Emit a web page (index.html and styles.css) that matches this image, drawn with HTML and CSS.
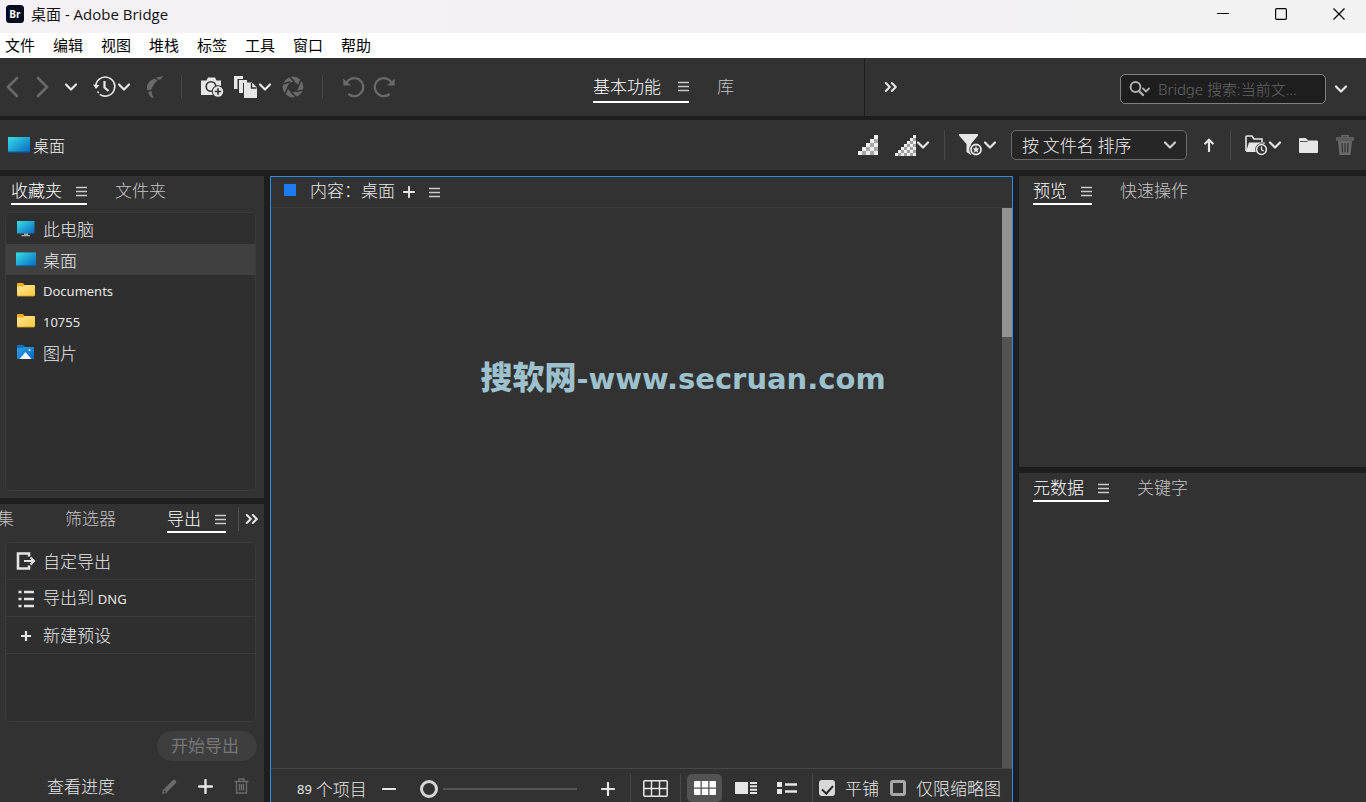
FILE: index.html
```html
<!DOCTYPE html>
<html lang="zh-CN">
<head>
<meta charset="utf-8">
<meta name="viewport" content="width=device-width, initial-scale=1">
<title>桌面 - Adobe Bridge</title>
<link rel="stylesheet" href="styles.css">
</head>
<body>
<svg class="defs" width="0" height="0" aria-hidden="true">
  <defs>
    <linearGradient id="blue" x1="0" y1="0" x2="1" y2="1"><stop offset="0" stop-color="#35dfe8"/><stop offset="1" stop-color="#0a67c0"/></linearGradient>
    <linearGradient id="yellow" x1="0" y1="0" x2="1" y2="1"><stop offset="0" stop-color="#ffe59c"/><stop offset="1" stop-color="#ffc937"/></linearGradient>
    <linearGradient id="photo" x1="0" y1="0" x2="1" y2="1"><stop offset="0" stop-color="#2aa5ec"/><stop offset="1" stop-color="#0a64bd"/></linearGradient>
    <symbol id="chev" viewBox="0 0 14 10"><path d="M2 2.500l5 5 5-5" fill="none" stroke="currentColor" stroke-width="2.200" stroke-linecap="round" stroke-linejoin="round"/></symbol>
    <symbol id="burger" viewBox="0 0 11 11"><path d="M0 1.500h11M0 5.500h11M0 9.500h11" stroke="currentColor" stroke-width="1.300"/></symbol>
    <symbol id="more" viewBox="0 0 14 12"><path d="M1.800 2l4 4-4 4M7.800 2l4 4-4 4" fill="none" stroke="currentColor" stroke-width="2.100" stroke-linecap="round" stroke-linejoin="round"/></symbol>
    <symbol id="plus" viewBox="0 0 14 14"><path d="M7 1v12M1 7h12" stroke="currentColor" stroke-width="2.200" stroke-linecap="round"/></symbol>
    <symbol id="folder" viewBox="0 0 18 14"><path d="M0 1q0-1 1-1h5l1.500 2H17v5H0z" fill="#f5ae0d"/><path d="M0 3.500h6L8 2h9q1 0 1 1v9q0 1-1 1H1q-1 0-1-1z" fill="url(#yellow)"/><path d="M0 13h17" stroke="#dea11e" stroke-width=".8"/></symbol>
    <symbol id="desk" viewBox="0 0 22 16"><path d="M0 0h22v15.500H0z" fill="url(#blue)"/><path d="M0 15.200h22" stroke="#0b4a82" stroke-width="1.200"/></symbol>
  </defs>
</svg>

<header class="titlebar">
  <svg width="18" height="18" viewBox="0 0 18 18" aria-hidden="true"><rect width="18" height="18" rx="3.500" fill="#020b1f"/><text x="9" y="12.500" text-anchor="middle" class="logo-text">Br</text></svg>
  <h1 class="window-title">桌面 - Adobe Bridge</h1>
  <div class="window-controls">
    <button aria-label="最小化"><svg width="12" height="12"><path d="M0 5.500h12" stroke="#000"/></svg></button>
    <button aria-label="最大化"><svg width="12" height="12"><rect x=".6" y=".6" width="10.800" height="10.800" rx="1.200" fill="none" stroke="#000" stroke-width="1.200"/></svg></button>
    <button aria-label="关闭"><svg width="12" height="12"><path d="M.5.5l11 11m0-11l-11 11" stroke="#000" stroke-width="1.200"/></svg></button>
  </div>
</header>

<nav class="menubar" aria-label="菜单">
  <button>文件</button><button>编辑</button><button>视图</button><button>堆栈</button><button>标签</button><button>工具</button><button>窗口</button><button>帮助</button>
</nav>

<div class="toolbar">
  <div class="tools">
    <div class="nav-tools">
      <button class="dim" aria-label="后退"><svg width="14" height="22" viewBox="0 0 14 22"><path d="M11 2L2 11l9 9" fill="none" stroke="currentColor" stroke-width="2.600" stroke-linecap="round"/></svg></button>
      <button class="dim" aria-label="前进"><svg width="14" height="22" viewBox="0 0 14 22"><path d="M3 2l9 9-9 9" fill="none" stroke="currentColor" stroke-width="2.600" stroke-linecap="round"/></svg></button>
      <button aria-label="导航选项"><svg width="14" height="10"><use href="#chev"/></svg></button>
      <button aria-label="历史记录"><svg width="24" height="24" viewBox="0 0 24 24"><path d="M2.800 12a9.500 9.500 0 1 1 4 7.300" fill="none" stroke="currentColor" stroke-width="1.600"/><path d="M4.500 16.500l1.200 1.500" stroke="currentColor" stroke-width="1.500"/><path d="M0 9.500l6.500.5L3 14z" fill="currentColor"/><path d="M11.500 6v6.500l4 3.500" fill="none" stroke="currentColor" stroke-width="2.200"/></svg><svg width="14" height="10"><use href="#chev"/></svg></button>
      <button class="dim" aria-label="返回应用程序"><svg width="18" height="24" viewBox="0 0 18 24"><path d="M8.500 3.500L11.500 5.500Q7.500 8.500 5.500 14.500L1.500 15.500Q-1 7.500 8.500 3.500zM10 2.800L17 1l-2 3.200-2.500.6zM2.200 17l3.500-1Q5.500 20 8 23L5 22.300Q2.800 20 2.200 17z" fill="currentColor"/></svg></button>
    </div>
    <div class="import-tools">
      <button aria-label="从相机获取照片"><svg width="24" height="22" viewBox="0 0 24 22"><path d="M1 4.500h5.500L8 1.500h7l1.500 3H21v8h-2a6 6 0 0 0-5 6.500H1z" fill="currentColor"/><circle cx="11" cy="10.500" r="4.800" fill="none" stroke="#323232" stroke-width="1.600"/><circle cx="18" cy="15.500" r="6.200" fill="#323232"/><circle cx="18" cy="15.500" r="5.200" fill="currentColor"/><path d="M18 12.300v6.400M14.800 15.500h6.400" stroke="#323232" stroke-width="1.600"/></svg></button>
      <button aria-label="优化"><svg width="24" height="22" viewBox="0 0 24 22"><path d="M0 0h9v3H3.500v10H0zM5 4h8v3H9v10H5z" fill="currentColor"/><path d="M10 6.500h8l5 5V22H10z" fill="currentColor"/><path d="M17.500 7v5h5" fill="none" stroke="#323232" stroke-width="1.400"/></svg><svg width="14" height="10"><use href="#chev"/></svg></button>
      <button class="dim" aria-label="在 Camera Raw 中打开"><svg width="22" height="22" viewBox="0 0 22 22"><circle cx="11" cy="11" r="7.800" fill="none" stroke="currentColor" stroke-width="5.200"/><path d="M7 0l5.500 6M19 4l-3.500 8M22 14l-8 1.500M15 22l-6-6M3 18l3.500-8M0 8l8-2" stroke="#323232" stroke-width="1.600"/></svg></button>
    </div>
    <div class="rotate-tools">
      <button class="dim" aria-label="逆时针旋转"><svg width="23" height="22" viewBox="0 0 23 22"><path d="M4.500 6.500A9 9 0 1 1 7 18.500" fill="none" stroke="currentColor" stroke-width="2.300" stroke-linecap="round"/><path d="M1 2.500l.5 7H9z" fill="currentColor"/></svg></button>
      <button class="dim" aria-label="顺时针旋转"><svg width="23" height="22" viewBox="0 0 23 22"><path d="M18.500 6.500A9 9 0 1 0 16 18.500" fill="none" stroke="currentColor" stroke-width="2.300" stroke-linecap="round"/><path d="M22 2.500l-.5 7H14z" fill="currentColor"/></svg></button>
    </div>
  </div>
  <div class="workspaces">
    <button class="tab active">基本功能<svg width="11" height="11"><use href="#burger"/></svg></button>
    <button class="tab">库</button>
  </div>
  <div class="toolbar-end">
    <button aria-label="更多工作区"><svg width="14" height="12"><use href="#more"/></svg></button>
    <div class="search-group">
      <label class="search"><svg width="22" height="16" viewBox="0 0 22 16"><circle cx="6.500" cy="6" r="4.900" fill="none" stroke="#b0b0b0" stroke-width="2"/><path d="M10 10l4 4" stroke="#b0b0b0" stroke-width="2.400" stroke-linecap="round"/><path d="M14 7.500l3 3 3-3" fill="none" stroke="#b0b0b0" stroke-width="1.800" stroke-linecap="round"/></svg><input type="text" aria-label="搜索" placeholder="Bridge 搜索:当前文..."></label>
      <button aria-label="搜索选项"><svg width="14" height="10"><use href="#chev"/></svg></button>
    </div>
  </div>
</div>

<div class="pathbar">
  <a class="crumb" href="#desktop"><svg width="22" height="16"><use href="#desk"/></svg>桌面</a>
  <div class="path-tools">
    <div class="tool-group wide">
      <button aria-label="浏览快速预览"><svg width="20" height="20" viewBox="0 0 20 20"><path d="M0 20v-4h4v-4h4V8h4V4h4V0h4v20z" fill="#a8a8a8"/><path d="M0 16h4v4H0zM4 12h4v4H4zM8 8h4v4H8zM12 4h4v4h-4zM16 0h4v4h-4zM8 16h4v4H8zM12 12h4v4h-4zM16 8h4v4h-4zM16 16h4v4h-4z" fill="#eee"/></svg></button>
      <button aria-label="缩略图质量"><svg width="21" height="21" viewBox="0 0 21 21"><path d="M0 21v-3h3v-3h3v-3h3V9h3V6h3V3h3V0h3v21z" fill="#a0a0a0"/><path d="M0 18h3v3H0zM3 15h3v3H3zM6 12h3v3H6zM9 9h3v3H9zM12 6h3v3h-3zM15 3h3v3h-3zM18 0h3v3h-3zM6 18h3v3H6zM9 15h3v3H9zM12 12h3v3h-3zM15 9h3v3h-3zM18 6h3v3h-3zM12 18h3v3h-3zM15 15h3v3h-3zM18 12h3v3h-3zM18 18h3v3h-3z" fill="#eee"/></svg><svg width="14" height="10"><use href="#chev"/></svg></button>
    </div>
    <span class="divider"></span>
    <button aria-label="按评级筛选"><svg width="24" height="22" viewBox="0 0 24 22"><path d="M0 0h19v1.500l-7 8.500v11L7.500 18v-8L0 1.500z" fill="currentColor"/><circle cx="17" cy="15.500" r="6.800" fill="#323232"/><circle cx="17" cy="15.500" r="5" fill="none" stroke="currentColor" stroke-width="1.800"/><path d="M17 11.800l1 2.400 2.600.2-2 1.700.7 2.600-2.300-1.400-2.300 1.400.7-2.600-2-1.700 2.600-.2z" fill="currentColor"/></svg><svg width="14" height="10"><use href="#chev"/></svg></button>
    <div class="tool-group">
      <div class="sort"><select aria-label="排序方式"><option>按 文件名 排序</option></select><svg width="14" height="10"><use href="#chev"/></svg></div>
      <button aria-label="升序"><svg width="10" height="14" viewBox="0 0 10 14"><path d="M5 13V2M1.200 5.500L5 1.700l3.800 3.800" fill="none" stroke="currentColor" stroke-width="2.200" stroke-linecap="round"/></svg></button>
      <span class="divider"></span>
    </div>
    <div class="tool-group wide">
      <button aria-label="打开最近使用的文件"><svg width="23" height="21" viewBox="0 0 23 21"><path d="M1 16V2q0-1 1-1h5l2 3h8v3" fill="none" stroke="currentColor" stroke-width="1.600"/><path d="M4 7.500h16L16 17H1z" fill="currentColor"/><circle cx="16.500" cy="14.500" r="6.300" fill="#323232"/><circle cx="16.500" cy="14.500" r="4.900" fill="none" stroke="currentColor" stroke-width="1.500"/><path d="M16.500 11.500v3.300l2.300 1.200" fill="none" stroke="currentColor" stroke-width="1.300"/></svg><svg width="14" height="10"><use href="#chev"/></svg></button>
      <button aria-label="新建文件夹"><svg width="19" height="15" viewBox="0 0 19 15"><path d="M0 1q0-1 1-1h6l2 2.500h9q1 0 1 1V14q0 1-1 1H1q-1 0-1-1z" fill="currentColor"/><path d="M1 3.500h7.500" stroke="#555"/></svg></button>
      <button class="dim" aria-label="删除"><svg width="18" height="20" viewBox="0 0 18 20"><path d="M1 3h16v2H1zM6 3V.8h6V3" fill="none" stroke="currentColor" stroke-width="1.600"/><path d="M2 6h14l-1.500 14h-11z" fill="currentColor"/><path d="M6 8l.5 9.500M9 8v9.500M12 8l-.5 9.500" stroke="#323232" stroke-width="1.200"/></svg></button>
    </div>
  </div>
</div>

<main class="workspace">
  <div class="column left">
    <section class="panel favorites">
      <div class="tabs"><button class="tab active">收藏夹<svg width="11" height="11"><use href="#burger"/></svg></button><button class="tab">文件夹</button></div>
      <ul class="box">
        <li><svg width="20" height="18" viewBox="0 0 20 18"><path d="M1 1h17.500v12.500H1z" fill="url(#blue)"/><path d="M8 13.500h4v1.500h2v1.200H5.500V15H8z" fill="#aaa"/></svg>此电脑</li>
        <li class="selected"><svg width="20" height="18" viewBox="0 0 22 19"><use href="#desk" width="22" height="16" y="1"/></svg>桌面</li>
        <li><svg width="20" height="18"><use href="#folder" x="1" y="1" width="18" height="14"/></svg><span class="latin">Documents</span></li>
        <li><svg width="20" height="18"><use href="#folder" x="1" y="1" width="18" height="14"/></svg><span class="latin">10755</span></li>
        <li><svg width="20" height="18" viewBox="0 0 20 18"><path d="M1 1h6l2 2h9v3H1z" fill="#0d70c8"/><path d="M1 4h5l2-1h10v12H1z" fill="url(#photo)"/><path d="M3.500 15l6-7 6 7z" fill="#edf5ff"/><circle cx="13.500" cy="6" r="1" fill="#fff"/></svg>图片</li>
      </ul>
    </section>
    <section class="panel export">
      <div class="tabs"><button class="tab clipped">集</button><button class="tab">筛选器</button><button class="tab active">导出<svg width="11" height="11"><use href="#burger"/></svg></button><button class="overflow" aria-label="更多面板"><svg width="14" height="12"><use href="#more"/></svg></button></div>
      <ul class="box">
        <li><svg width="20" height="20" viewBox="0 0 20 20"><path d="M13 5.500V2.500H2v15h11v-3" fill="none" stroke="#e4e4e4" stroke-width="2.600"/><path d="M8 10h9M14.500 6.500L18 10l-3.500 3.500" fill="none" stroke="#e4e4e4" stroke-width="2.200"/></svg>自定导出</li>
        <li><svg width="20" height="20" viewBox="0 0 20 20"><path d="M2.500 4h3M2.500 11h3M2.500 18h3M8 4h10M8 11h10M8 18h10" stroke="#e4e4e4" stroke-width="2.400"/></svg><span>导出到 <span class="latin">DNG</span></span></li>
        <li><svg width="20" height="20" viewBox="0 0 20 20"><path d="M10 6v10M5 11h10" stroke="#e4e4e4" stroke-width="2.200"/></svg>新建预设</li>
      </ul>
      <button class="start" disabled>开始导出</button>
      <div class="export-foot">
        <button class="progress">查看进度</button>
        <button class="dim" aria-label="编辑预设"><svg width="15" height="15" viewBox="0 0 15 15"><path d="M1.500 10.500L11 1q1-.8 2 0l1 1q.8 1 0 2L4.500 13.500z" fill="currentColor"/><path d="M1.500 10.500L.8 14.200l3.700-.7" fill="none" stroke="currentColor" stroke-width="1.200"/></svg></button>
        <button aria-label="添加预设"><svg width="15" height="15"><use href="#plus"/></svg></button>
        <button class="dim" aria-label="删除预设"><svg width="15" height="16" viewBox="0 0 15 16"><path d="M.5 3.500h14M5 3V1h5v2M2.500 4v11h10V4M5.500 6v6.500M7.500 6v6.500M9.500 6v6.500" fill="none" stroke="currentColor" stroke-width="1.400"/></svg></button>
      </div>
    </section>
  </div>

  <section class="content">
    <div class="content-head"><span class="marker"></span><h2>内容：桌面</h2><button aria-label="新建内容面板"><svg width="12" height="12"><use href="#plus"/></svg></button><button aria-label="面板菜单"><svg width="11" height="11"><use href="#burger"/></svg></button></div>
    <div class="content-body"><div class="scrollbar"><div class="thumb"></div></div></div>
    <div class="statusbar">
      <span class="count"><span class="latin">89</span> 个项目</span>
      <div class="zoom">
        <button aria-label="较小的缩略图"><svg width="14" height="14" viewBox="0 0 14 14"><path d="M1 7h12" stroke="currentColor" stroke-width="2.200" stroke-linecap="round"/></svg></button>
        <input type="range" min="0" max="100" value="0" aria-label="缩略图大小">
        <button aria-label="较大的缩略图"><svg width="14" height="14"><use href="#plus"/></svg></button>
      </div>
      <div class="lock"><button aria-label="锁定缩略图网格"><svg width="25" height="17" viewBox="0 0 25 17"><rect x=".8" y=".8" width="23.400" height="15.400" rx="1" fill="none" stroke="currentColor" stroke-width="1.500"/><path d="M8.500 1v15M16.500 1v15M1 8.500h23" stroke="currentColor" stroke-width="1.400"/></svg></button></div>
      <div class="views">
        <button class="view on" aria-label="以缩略图形式查看"><svg width="22" height="14"><path d="M1 0h5.500v6.500H0V1q0-1 1-1zM7.800 0h6.400v6.500H7.800zM15.500 0H21q1 0 1 1v5.500h-6.500zM0 7.800h6.500V14H1q-1 0-1-1zM7.800 7.800h6.400V14H7.800zM15.500 7.800H22V13q0 1-1 1h-5.500z" fill="#fff"/></svg></button>
        <button class="view" aria-label="以详细信息形式查看"><svg width="22" height="12"><path d="M0 0h13v12H0z" fill="currentColor"/><path d="M15 1h7M15 4.300h7M15 7.700h7M15 11h7" stroke="currentColor" stroke-width="1.900"/></svg></button>
        <button class="view" aria-label="以列表形式查看"><svg width="22" height="12"><path d="M1 0h5v5H1zM1 7h5v5H1z" fill="currentColor"/><path d="M9 2.500h12M9 9.500h12" stroke="currentColor" stroke-width="2.400"/></svg></button>
      </div>
      <div class="checks">
        <label><input type="checkbox" checked>平铺</label>
        <label><input type="checkbox">仅限缩略图</label>
      </div>
    </div>
  </section>

  <div class="column right">
    <section class="panel"><div class="tabs"><button class="tab active">预览<svg width="11" height="11"><use href="#burger"/></svg></button><button class="tab">快速操作</button></div></section>
    <section class="panel"><div class="tabs"><button class="tab active">元数据<svg width="11" height="11"><use href="#burger"/></svg></button><button class="tab">关键字</button></div></section>
  </div>
</main>
<div class="watermark"><span>搜软网</span>-www.secruan.com</div>
</body>
</html>
```
FILE: styles.css
```css
* { box-sizing: border-box; }

body {
  position: relative;
  display: flex;
  flex-direction: column;
  height: 100vh;
  margin: 0;
  overflow: hidden;
  background: #1e1e1e;
  color: #e8e8e8;
  font: 300 17px/24px "Noto Sans CJK SC", sans-serif;
}

.defs { position: absolute; }
svg { display: block; flex: none; }

button {
  display: flex;
  align-items: center;
  padding: 0;
  border: 0;
  background: none;
  color: #e6e6e6;
  font: inherit;
  white-space: nowrap;
}

.dim { color: #6a6a6a; }
.latin { font: 400 13px/24px "Noto Sans", "Open Sans", sans-serif; }

/* Window frame */
.titlebar {
  display: flex;
  align-items: center;
  height: 33px;
  flex: none;
  padding: 0 21px 6px 6px;
  gap: 7px;
  background: linear-gradient(90deg, #f6f1f7, #f2f2f2);
  color: #111;
}

.logo-text { fill: #fff; font: 700 10px "Open Sans", sans-serif; }
.window-title { margin: 0; font: 400 15px/24px "Open Sans", "Noto Sans CJK SC", sans-serif; }
.window-controls { display: flex; gap: 46px; margin-left: auto; }

.menubar {
  display: flex;
  flex: none;
  align-items: center;
  gap: 18px;
  height: 25px;
  padding: 0 0 2px 5px;
  background: #fff;
}

.menubar button { color: #000; font-size: 15px; font-weight: 400; }

/* Application toolbar */
.toolbar {
  display: flex;
  flex: none;
  height: 58px;
  margin-bottom: 4px;
  background: #323232;
}

.tools { display: flex; flex: 1; align-items: center; padding-left: 6px; }
.nav-tools, .import-tools, .rotate-tools { display: flex; align-items: center; height: 24px; }
.nav-tools { gap: 15px; padding-right: 17px; }
.import-tools { gap: 10px; padding: 0 18px; border: solid #464646; border-width: 0 1px; }
.rotate-tools { gap: 8px; padding-left: 19px; }

.workspaces { display: flex; gap: 28px; width: 271px; padding-top: 15px; }

.tab {
  align-items: center;
  height: 30px;
  flex: none;
  padding-bottom: 2px;
  border-bottom: 2px solid transparent;
  color: #c4c4c4;
}

.tab svg { margin-left: 17px; }
.tab.active { border-color: #fff; color: #fff; }
.tab svg, .content-head button + button { color: #ccc; }

.toolbar-end {
  display: flex;
  align-items: center;
  justify-content: space-between;
  width: 502px;
  padding: 0 18px 0 19px;
  border-left: 1px solid #1e1e1e;
}

.search-group { display: flex; align-items: center; gap: 8px; padding-top: 4px; }

.search {
  display: flex;
  align-items: center;
  gap: 7px;
  width: 206px;
  height: 30px;
  padding: 0 8px;
  border: 1px solid #808080;
  border-radius: 5px;
  background: #1e1e1e;
}

.search input {
  flex: 1;
  min-width: 0;
  padding: 0;
  border: 0;
  outline: 0;
  background: none;
  color: #ddd;
  font: 300 15px/24px "Noto Sans", "Noto Sans CJK SC", sans-serif;
}

.search input::placeholder { color: #666; }

/* Location bar */
.pathbar {
  display: flex;
  align-items: center;
  justify-content: space-between;
  flex: none;
  height: 50px;
  margin-bottom: 6px;
  padding: 0 12px 0 8px;
  background: #323232;
}

.crumb { display: flex; align-items: center; gap: 3px; color: #f2f2f2; font-size: 16px; text-decoration: none; }
.path-tools { display: flex; align-items: center; gap: 14px; }
.path-tools button { min-width: 19px; justify-content: center; }
.tool-group { display: flex; align-items: center; gap: 12px; }
.tool-group.wide { gap: 17px; }
.divider { width: 1px; height: 30px; background: #4a4a4a; }

.sort {
  display: flex;
  align-items: center;
  width: 176px;
  height: 30px;
  padding-right: 9px;
  border: 1px solid #6a6a6a;
  border-radius: 5px;
  background: #262626;
  color: #ccc;
}

.sort select {
  flex: 1;
  min-width: 0;
  padding: 0 0 0 10px;
  appearance: none;
  border: 0;
  background: none;
  color: #eee;
  font: inherit;
}

/* Panels */
.workspace { display: grid; flex: 1; grid-template-columns: 264px 1fr 347px; gap: 6px; min-height: 0; }
.column { display: grid; gap: 6px; min-width: 0; min-height: 0; }
.left { grid-template-rows: 322fr 298fr; }
.right { grid-template-rows: 291fr 329fr; }
.panel { display: flex; flex-direction: column; min-width: 0; min-height: 0; overflow: hidden; background: #323232; }
.tabs { display: flex; flex: none; gap: 28px; height: 36px; padding-left: 11px; }
.panel .tab { height: 29px; padding-bottom: 0; }
.panel .tab svg { margin-left: 14px; margin-top: 4px; }
.right .tabs { padding-left: 14px; }

.box {
  flex: 1;
  margin: 0 8px 7px 5px;
  padding: 0;
  border: 1px solid #3b3b3b;
  border-radius: 5px;
  background: #2f2f2f;
  list-style: none;
}

.box li { display: flex; align-items: center; gap: 7px; height: 31px; padding-left: 10px; }
.box .selected { background: #404040; }

.export .tabs { gap: 51px; height: 38px; padding-left: 0; }
.export .clipped { width: 14px; justify-content: flex-end; }
.export .overflow { height: 24px; margin: 3px 0 0 -39px; padding-left: 6px; border-left: 1px solid #505050; }
.export .box { flex: none; height: 180px; margin-bottom: 9px; }
.export li { height: 37px; border-bottom: 1px solid #3b3b3b; }

.start {
  justify-content: center;
  align-self: flex-end;
  width: 100px;
  height: 30px;
  flex: none;
  margin-right: 7px;
  padding: 0 4px 2px 0;
  border-radius: 15px;
  background: #3e3e3e;
  color: #777;
  font-weight: 400;
}

.export-foot { display: flex; align-items: center; gap: 21px; margin-top: 13px; padding: 0 15px 0 47px; }
.progress { margin-right: auto; }

/* Content panel */
.content { display: flex; flex-direction: column; min-width: 0; border: solid #2d8ceb; border-width: 1px 1px 0; background: #323232; }
.content-head { display: flex; align-items: center; flex: none; gap: 14px; height: 31px; padding: 0 13px 4px; border-bottom: 1px solid #3c3c3c; }
.content-head button { margin: 4px 0 0 -6px; }
.content-head button + button { margin-left: 0; }
.content-head h2 { margin: 0; font: inherit; }
.marker { width: 12px; height: 12px; background: #1f7cf0; }
.content-body { display: flex; flex: 1; justify-content: flex-end; min-height: 0; }
.scrollbar { width: 10px; background: #535353; }
.thumb { height: 129px; background: #929292; }

.statusbar { display: flex; flex: none; height: 34px; padding: 5px 11px 0 26px; border-top: 1px solid #474747; }
.statusbar > * { display: flex; align-items: center; height: 28px; }
.count { padding-top: 1px; white-space: pre; }
.zoom { flex: 1; gap: 24px; min-width: 0; padding: 2px 15px 0; }

.zoom input {
  flex: 1;
  min-width: 0;
  height: 18px;
  margin: 0;
  appearance: none;
  background: linear-gradient(#555, #555) 23px 50% / 100% 2px no-repeat;
}

.zoom input::-webkit-slider-thumb {
  width: 18px;
  height: 18px;
  appearance: none;
  border: 3px solid #d6d6d6;
  border-radius: 50%;
  background: #323232;
}

.lock { padding: 0 12px; border: solid #484848; border-width: 0 1px; }
.views { gap: 6px; padding: 0 8px 0 6px; }
.view { justify-content: center; width: 35px; height: 28px; border-radius: 5px; }
.view.on { background: #535353; }
.checks { gap: 11px; padding-left: 6px; border-left: 1px solid #484848; }
.checks label { display: flex; align-items: center; gap: 10px; white-space: nowrap; }

.checks input {
  display: grid;
  place-items: center;
  width: 16px;
  height: 16px;
  margin: 0;
  appearance: none;
  border: 3px solid #a8a8a8;
  border-radius: 3px;
}

.checks input:checked { border-color: #d8d8d8; background: #d8d8d8; }

.checks input:checked::before {
  content: "";
  width: 5px;
  height: 9px;
  margin-bottom: 2px;
  border: solid #282828;
  border-width: 0 2px 2px 0;
  transform: rotate(42deg);
}

.watermark {
  position: absolute;
  top: 47%;
  left: 0;
  right: 0;
  margin-top: -22px;
  color: #9dc1cd;
  font: 700 29px/40px "DejaVu Sans", "Noto Sans CJK SC", sans-serif;
  text-align: center;
  white-space: nowrap;
  pointer-events: none;
}

.watermark span { font: 900 32px/40px "Noto Sans CJK SC", sans-serif; }
```
